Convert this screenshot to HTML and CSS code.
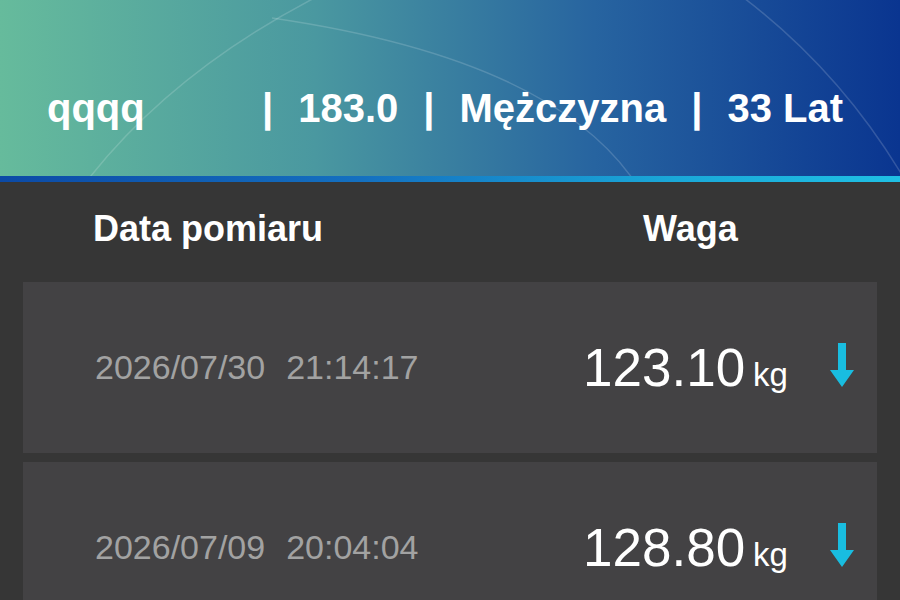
FILE: index.html
```html
<!DOCTYPE html>
<html lang="pl">
<head>
<meta charset="utf-8">
<link rel="stylesheet" href="styles.css">
</head>
<body>
<div class="screen">
  <header class="hero">
    <svg class="arcs" width="900" height="176" viewBox="0 0 900 176">
      <path d="M 80 190 Q 170 70 330 -10" />
      <path d="M 272 18 Q 560 60 640 190" />
      <path d="M 740 -5 Q 840 70 905 180" />
    </svg>
    <div class="profile">
      <span class="name">qqqq</span>
      <div class="facts">
        <span>|</span><span>183.0</span><span>|</span><span>Mężczyzna</span><span>|</span><span>33 Lat</span>
      </div>
    </div>
  </header>
  <div class="stripe"></div>
  <div class="cols">
    <span class="col-date">Data pomiaru</span>
    <span class="col-weight">Waga</span>
  </div>
  <div class="list">
    <div class="card">
      <div class="when"><span>2026/07/30</span><span>21:14:17</span></div>
      <div class="weight">
        <span class="num">123.10</span><span class="unit">kg</span>
        <svg class="arrow" width="24" height="44" viewBox="0 0 24 44"><path d="M8 0 H16 V27 H24 L12 44 L0 27 H8 Z"/></svg>
      </div>
    </div>
    <div class="card">
      <div class="when"><span>2026/07/09</span><span>20:04:04</span></div>
      <div class="weight">
        <span class="num">128.80</span><span class="unit">kg</span>
        <svg class="arrow" width="24" height="44" viewBox="0 0 24 44"><path d="M8 0 H16 V27 H24 L12 44 L0 27 H8 Z"/></svg>
      </div>
    </div>
  </div>
</div>
</body>
</html>
```
FILE: styles.css
```css
* { box-sizing: border-box; }
html, body { margin: 0; padding: 0; }
body {
  width: 900px;
  height: 600px;
  overflow: hidden;
  background: #363636;
  font-family: "Liberation Sans", Arial, sans-serif;
}
.screen { width: 900px; height: 600px; overflow: hidden; }
.hero {
  position: relative;
  height: 176px;
  background: linear-gradient(90deg, #66bb9c 0%, #4a98a0 35%, #2764a0 66%, #0a3590 100%);
  overflow: hidden;
}
.arcs {
  position: absolute;
  left: 0;
  top: 0;
}
.arcs path {
  fill: none;
  stroke: rgba(255, 255, 255, 0.16);
  stroke-width: 1.5;
}
.profile {
  position: relative;
  display: flex;
  align-items: center;
  height: 176px;
  padding: 40px 0 0 47px;
  color: #fff;
  font-weight: bold;
  font-size: 40px;
}
.name { width: 215px; }
.facts { display: flex; gap: 25px; }
.stripe {
  height: 6px;
  background: linear-gradient(90deg, #0c4aa6 0%, #1470c0 40%, #1aa8d8 75%, #1fc0e4 100%);
}
.cols {
  display: flex;
  align-items: center;
  height: 96px;
  padding-bottom: 2px;
  margin-bottom: 4px;
  color: #fff;
  font-weight: bold;
  font-size: 36px;
}
.col-date { padding-left: 93px; width: 643px; }
.list {
  display: flex;
  flex-direction: column;
  gap: 9px;
  padding: 0 23px;
}
.card {
  display: flex;
  align-items: center;
  flex: none;
  height: 171px;
  background: #434244;
}
.when {
  display: flex;
  gap: 21px;
  width: 560px;
  padding-left: 72px;
  color: #a2a2a2;
  font-size: 34px;
}
.weight {
  display: flex;
  align-items: baseline;
  color: #fff;
}
.num { font-size: 53px; }
.unit { font-size: 33px; margin-left: 8px; }
.arrow {
  align-self: center;
  margin-left: 42px;
  margin-top: -6px;
  fill: #19bde0;
}
```
